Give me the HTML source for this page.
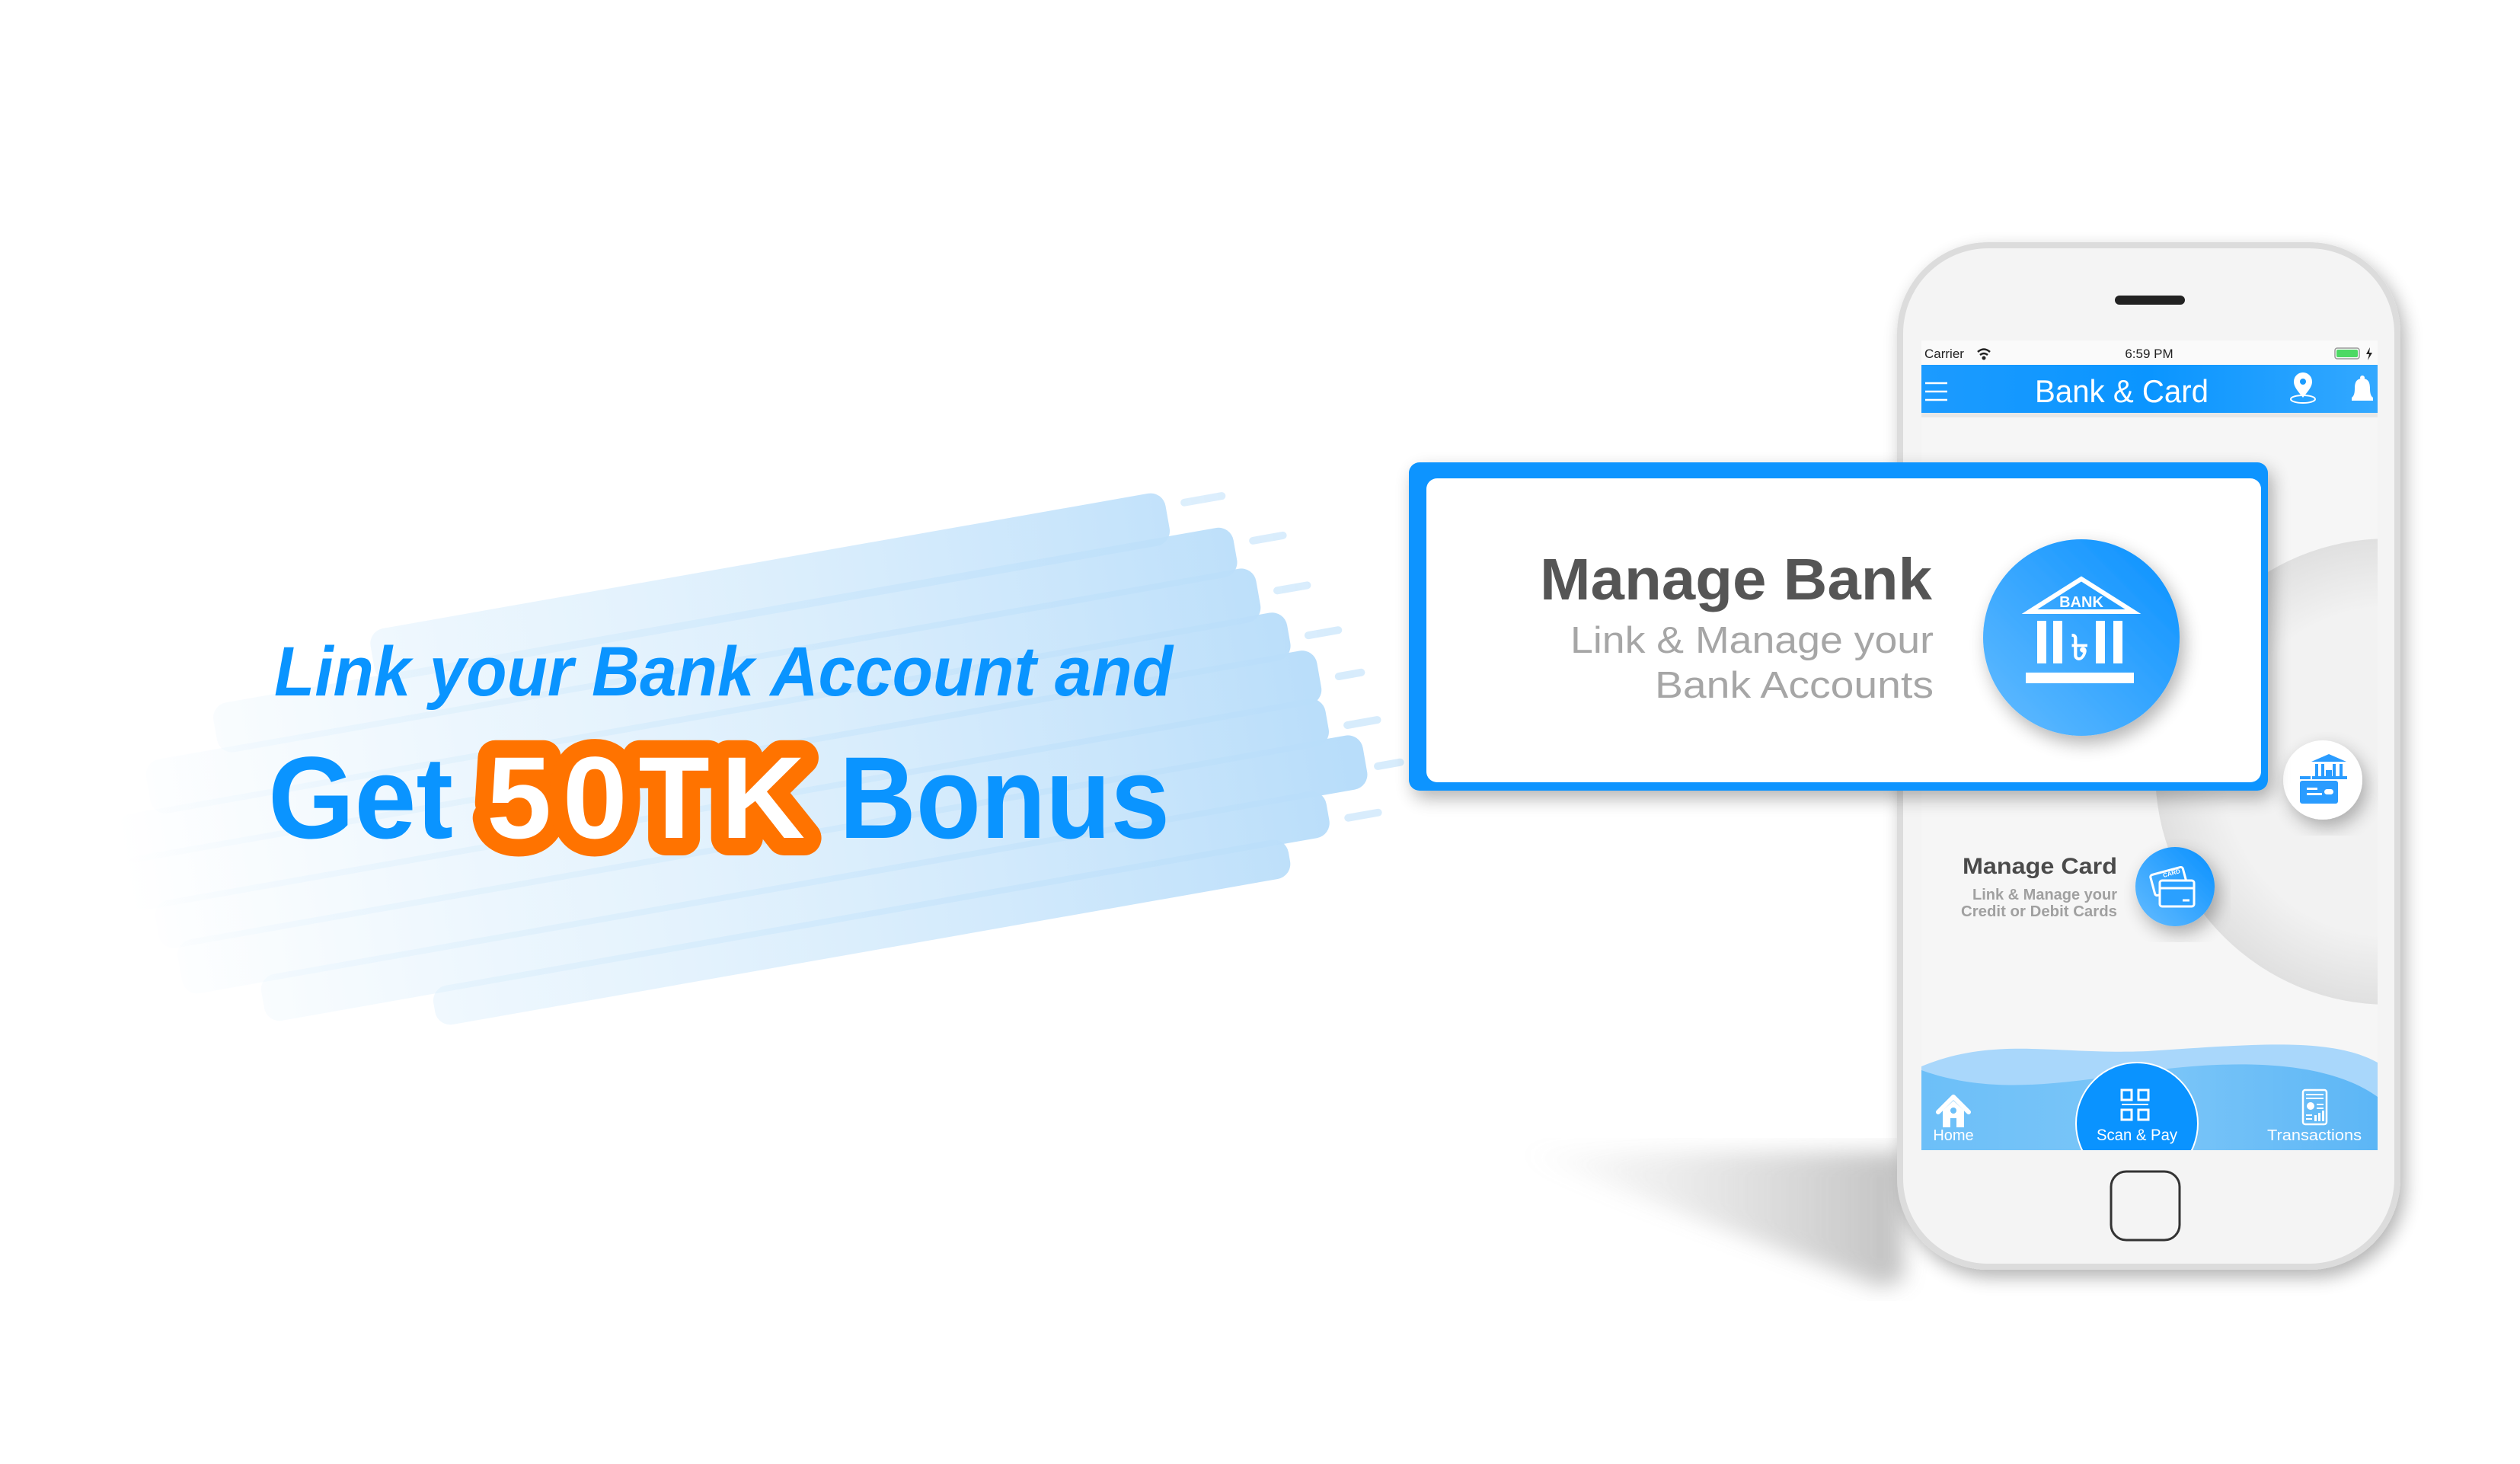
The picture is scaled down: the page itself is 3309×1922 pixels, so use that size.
<!DOCTYPE html>
<html><head><meta charset="utf-8">
<style>
html,body{margin:0;padding:0;background:#fff;}
svg{display:block;}
text{font-family:"Liberation Sans",Arial,sans-serif;}
</style></head>
<body>
<svg width="3309" height="1922" viewBox="0 0 3309 1922" xmlns="http://www.w3.org/2000/svg">
<defs>
  <linearGradient id="brush" gradientUnits="userSpaceOnUse" x1="150" y1="0" x2="1760" y2="0">
    <stop offset="0" stop-color="#d8edfc" stop-opacity="0"/>
    <stop offset="0.3" stop-color="#d8edfc" stop-opacity="0.5"/>
    <stop offset="1" stop-color="#b8ddfa"/>
  </linearGradient>
  <linearGradient id="bluecirc" x1="0" y1="1" x2="1" y2="0">
    <stop offset="0" stop-color="#64bcff"/>
    <stop offset="1" stop-color="#0890ff"/>
  </linearGradient>
  <linearGradient id="navbar" x1="0" y1="0" x2="1" y2="0">
    <stop offset="0" stop-color="#1c9bff"/>
    <stop offset="0.5" stop-color="#0a95ff"/>
    <stop offset="1" stop-color="#33a8ff"/>
  </linearGradient>
  <linearGradient id="wave" x1="0" y1="0" x2="1" y2="0">
    <stop offset="0" stop-color="#6cbff8"/>
    <stop offset="0.5" stop-color="#7cc6f8"/>
    <stop offset="1" stop-color="#5cb6f6"/>
  </linearGradient>
  <linearGradient id="shadow" x1="0" y1="0" x2="1" y2="0">
    <stop offset="0" stop-color="#ccc" stop-opacity="0"/>
    <stop offset="1" stop-color="#aaa" stop-opacity="0.9"/>
  </linearGradient>
  <radialGradient id="gcirc" cx="0.5" cy="0.5" r="0.5">
    <stop offset="0.7" stop-color="#f2f2f2"/>
    <stop offset="1" stop-color="#e0e0e0"/>
  </radialGradient>
  <filter id="ds" x="-20%" y="-20%" width="140%" height="140%">
    <feGaussianBlur in="SourceAlpha" stdDeviation="12"/>
    <feOffset dx="6" dy="10"/>
    <feComponentTransfer><feFuncA type="linear" slope="0.3"/></feComponentTransfer>
    <feMerge><feMergeNode/><feMergeNode in="SourceGraphic"/></feMerge>
  </filter>
  <filter id="blur"><feGaussianBlur stdDeviation="14"/></filter>
  <clipPath id="scr"><rect x="2523" y="447" width="599" height="1063"/></clipPath>
</defs>

<!-- brush background -->
<g transform="translate(0,50) rotate(-10 950 950)" fill="url(#brush)">
  <rect x="520" y="700" width="1060" height="70" rx="20"/>
  <rect x="300" y="760" width="1360" height="66" rx="20"/>
  <rect x="200" y="818" width="1480" height="72" rx="20"/>
  <rect x="150" y="882" width="1560" height="64" rx="20"/>
  <rect x="150" y="938" width="1590" height="72" rx="20"/>
  <rect x="180" y="1002" width="1560" height="64" rx="20"/>
  <rect x="200" y="1058" width="1580" height="72" rx="20"/>
  <rect x="300" y="1122" width="1420" height="62" rx="20"/>
  <rect x="520" y="1176" width="1140" height="52" rx="20"/>
  <g opacity="0.55">
  <rect x="1600" y="715" width="60" height="10" rx="5"/>
  <rect x="1680" y="780" width="50" height="10" rx="5"/>
  <rect x="1700" y="850" width="50" height="10" rx="5"/>
  <rect x="1730" y="915" width="50" height="10" rx="5"/>
  <rect x="1760" y="975" width="40" height="10" rx="5"/>
  <rect x="1760" y="1040" width="50" height="10" rx="5"/>
  <rect x="1790" y="1100" width="40" height="10" rx="5"/>
  <rect x="1740" y="1160" width="50" height="10" rx="5"/>
  </g>
</g>

<!-- left text -->
<text x="360" y="913" font-size="92" font-weight="bold" font-style="italic" fill="#0a94ff" textLength="1180" lengthAdjust="spacingAndGlyphs">Link your Bank Account and</text>
<text x="352" y="1100" font-size="153" font-weight="bold" fill="#0a94ff" textLength="243" lengthAdjust="spacingAndGlyphs">Get</text>
<text x="639" y="1100" font-size="153" font-weight="bold" fill="#ff7300" stroke="#ff7300" stroke-width="46" stroke-linejoin="round" textLength="418" lengthAdjust="spacing">50TK</text>
<text x="639" y="1100" font-size="153" font-weight="bold" fill="#ffffff" textLength="418" lengthAdjust="spacing">50TK</text>
<text x="1102" y="1100" font-size="153" font-weight="bold" fill="#0a94ff" textLength="434" lengthAdjust="spacingAndGlyphs">Bonus</text>

<!-- phone shadow -->
<polygon points="1990,1512 2500,1512 2500,1680 2470,1690" fill="url(#shadow)" filter="url(#blur)" opacity="0.8"/>

<!-- phone body -->
<rect x="2491" y="318" width="661" height="1349" rx="120" fill="#dcdcdc" filter="url(#ds)"/>
<rect x="2499" y="326" width="645" height="1333" rx="112" fill="#f4f4f4"/>
<rect x="2777" y="388" width="92" height="12" rx="6" fill="#222"/>
<rect x="2772" y="1538" width="90" height="90" rx="20" fill="none" stroke="#333" stroke-width="3"/>

<!-- screen -->
<g clip-path="url(#scr)">
  <rect x="2523" y="447" width="599" height="1063" fill="#f6f6f6"/>
  <circle cx="3136" cy="1013" r="306" fill="url(#gcirc)"/>
  <rect x="2523" y="447" width="599" height="32" fill="#fafafa"/>
  <text x="2527" y="470" font-size="17" fill="#222">Carrier</text>
  <path d="M2597 462 q8 -7 16 0 M2600 466 q5 -4 10 0" stroke="#222" stroke-width="2.5" fill="none"/>
  <circle cx="2605" cy="470" r="2.5" fill="#222"/>
  <text x="2822" y="470" font-size="17" fill="#222" text-anchor="middle">6:59 PM</text>
  <rect x="3066" y="457" width="32" height="14" rx="3" fill="none" stroke="#999" stroke-width="1.5"/>
  <rect x="3068" y="459" width="28" height="10" rx="2" fill="#4cd964"/>
  <path d="M3112 456 l-5 9 h4 l-2 8 l6 -10 h-4 z" fill="#222"/>
  <rect x="2523" y="479" width="599" height="63" fill="url(#navbar)"/>
  <rect x="2523" y="542" width="599" height="6" fill="#000" opacity="0.06"/>
  <g stroke="#fff" stroke-width="2.5"><line x1="2528" y1="503" x2="2557" y2="503"/><line x1="2528" y1="514" x2="2557" y2="514"/><line x1="2528" y1="525" x2="2557" y2="525"/></g>
  <text x="2786" y="528" font-size="42" fill="#fff" text-anchor="middle" textLength="228" lengthAdjust="spacingAndGlyphs">Bank &amp; Card</text>
  <path d="M3024 522 c-7 -9 -12 -14 -12 -21 a12 12 0 0 1 24 0 c0 7 -5 12 -12 21z" fill="#fff"/>
  <circle cx="3024" cy="501" r="4" fill="#1a9bff"/>
  <ellipse cx="3024" cy="524" rx="16" ry="5" fill="none" stroke="#fff" stroke-width="2"/>
  <path d="M3088 526 h28 v-4 c-3 -2 -4 -6 -4 -12 c0 -9 -3 -13 -10 -13 c-7 0 -10 4 -10 13 c0 6 -1 10 -4 12z" fill="#fff"/>
  <circle cx="3102" cy="496" r="3" fill="#fff"/>

  <text x="2780" y="1147" font-size="30" font-weight="bold" fill="#4a4a4a" text-anchor="end" textLength="203" lengthAdjust="spacingAndGlyphs">Manage Card</text>
  <text x="2780" y="1181" font-size="20" font-weight="bold" fill="#a0a0a0" text-anchor="end" textLength="190" lengthAdjust="spacingAndGlyphs">Link &amp; Manage your</text>
  <text x="2780" y="1203" font-size="20" font-weight="bold" fill="#a0a0a0" text-anchor="end" textLength="205" lengthAdjust="spacingAndGlyphs">Credit or Debit Cards</text>
  <g filter="url(#ds)"><circle cx="2856" cy="1164" r="52" fill="url(#bluecirc)"/></g>
  <g stroke="#fff" stroke-width="3" fill="none">
    <rect x="2826" y="1143" width="44" height="28" rx="3" transform="rotate(-15 2848 1157)"/>
    <rect x="2836" y="1156" width="45" height="34" rx="3" fill="#2aa0ff"/>
    <line x1="2836" y1="1166" x2="2881" y2="1166"/>
    <line x1="2866" y1="1182" x2="2875" y2="1182"/>
  </g>
  <text x="2840" y="1150" font-size="8" font-weight="bold" fill="#fff" transform="rotate(-15 2848 1147)">CARD</text>

  <path d="M2523 1400 C2620 1360 2700 1385 2820 1380 C2950 1372 3060 1360 3122 1395 L3122 1510 L2523 1510Z" fill="#a9d7fb"/>
  <path d="M2523 1405 C2620 1440 2720 1420 2830 1405 C2950 1390 3060 1395 3122 1440 L3122 1510 L2523 1510Z" fill="url(#wave)"/>
  <circle cx="2806" cy="1475" r="80" fill="#0a93ff" stroke="#fff" stroke-width="2"/>
  <path d="M2545 1460 l20 -20 l20 20" stroke="#fff" stroke-width="6" fill="none" stroke-linejoin="round" stroke-linecap="round"/>
  <path d="M2551 1458 l14 -13 l14 13 v22 h-10 v-12 h-8 v12 h-10z" fill="#fff"/>
  <circle cx="2565" cy="1458" r="4" fill="#6cbff8"/>
  <text x="2565" y="1497" font-size="20" fill="#fff" text-anchor="middle">Home</text>
  <g fill="none" stroke="#fff" stroke-width="3">
    <rect x="2786" y="1431" width="13" height="13"/><rect x="2808" y="1431" width="13" height="13"/>
    <rect x="2786" y="1457" width="13" height="13"/><rect x="2808" y="1457" width="13" height="13"/>
  </g>
  <rect x="2786" y="1449" width="35" height="2" fill="#fff"/>
  <text x="2806" y="1497" font-size="21" fill="#fff" text-anchor="middle" textLength="106" lengthAdjust="spacingAndGlyphs">Scan &amp; Pay</text>
  <rect x="3024" y="1431" width="31" height="45" rx="3" fill="none" stroke="#fff" stroke-width="2.5"/>
  <g fill="#fff"><rect x="3028" y="1436" width="23" height="2"/><rect x="3028" y="1441" width="23" height="2"/>
  <circle cx="3034" cy="1452" r="5"/><rect x="3042" y="1449" width="9" height="2"/><rect x="3042" y="1454" width="9" height="2"/>
  <rect x="3028" y="1463" width="8" height="2"/><rect x="3028" y="1468" width="8" height="2"/>
  <rect x="3039" y="1464" width="3" height="8"/><rect x="3044" y="1461" width="3" height="11"/><rect x="3049" y="1458" width="3" height="14"/></g>
  <text x="3039" y="1497" font-size="20" fill="#fff" text-anchor="middle" textLength="124" lengthAdjust="spacingAndGlyphs">Transactions</text>
</g>

<g filter="url(#ds)"><circle cx="3050" cy="1024" r="52" fill="#fff"/></g>
<g fill="#2a9cff">
  <path d="M3035 1000 l23 -10 l23 10z"/>
  <rect x="3040" y="1003" width="4" height="16"/><rect x="3048" y="1003" width="4" height="16"/><rect x="3063" y="1003" width="4" height="16"/><rect x="3072" y="1003" width="4" height="16"/>
  <rect x="3054" y="1011" width="8" height="8"/>
  <rect x="3036" y="1019" width="46" height="4"/>
  <rect x="3020" y="1019" width="14" height="4"/>
  <rect x="3020" y="1025" width="50" height="30" rx="3"/>
</g>
<g fill="#fff"><rect x="3029" y="1034" width="14" height="3"/><rect x="3029" y="1041" width="20" height="3"/><rect x="3052" y="1036" width="12" height="7" rx="3.5"/></g>

<g filter="url(#ds)">
  <rect x="1850" y="607" width="1128" height="431" rx="14" fill="#0894ff"/>
</g>
<rect x="1873" y="628" width="1096" height="399" rx="14" fill="#fff"/>
<text x="2537" y="787" font-size="77" font-weight="bold" fill="#555" text-anchor="end" textLength="515" lengthAdjust="spacingAndGlyphs">Manage Bank</text>
<text x="2539" y="857" font-size="49" fill="#a6a6a6" text-anchor="end" textLength="477" lengthAdjust="spacingAndGlyphs">Link &amp; Manage your</text>
<text x="2539" y="916" font-size="49" fill="#a6a6a6" text-anchor="end" textLength="366" lengthAdjust="spacingAndGlyphs">Bank Accounts</text>
<g filter="url(#ds)"><circle cx="2733" cy="837" r="129" fill="url(#bluecirc)"/></g>
<path d="M2733 760 L2665 803 L2801 803 Z" fill="none" stroke="#fff" stroke-width="6" stroke-linejoin="miter"/>
<text x="2733" y="797" font-size="20" font-weight="bold" fill="#fff" text-anchor="middle">BANK</text>
<g fill="#fff">
  <rect x="2675" y="815" width="12" height="56"/><rect x="2696" y="815" width="12" height="56"/>
  <rect x="2752" y="815" width="12" height="56"/><rect x="2775" y="815" width="12" height="56"/>
  <rect x="2660" y="883" width="142" height="14"/>
</g>
<text x="2731" y="866" font-size="46" font-weight="bold" fill="#fff" text-anchor="middle" font-family="'DejaVu Sans',sans-serif">৳</text>
</svg>
</body></html>
